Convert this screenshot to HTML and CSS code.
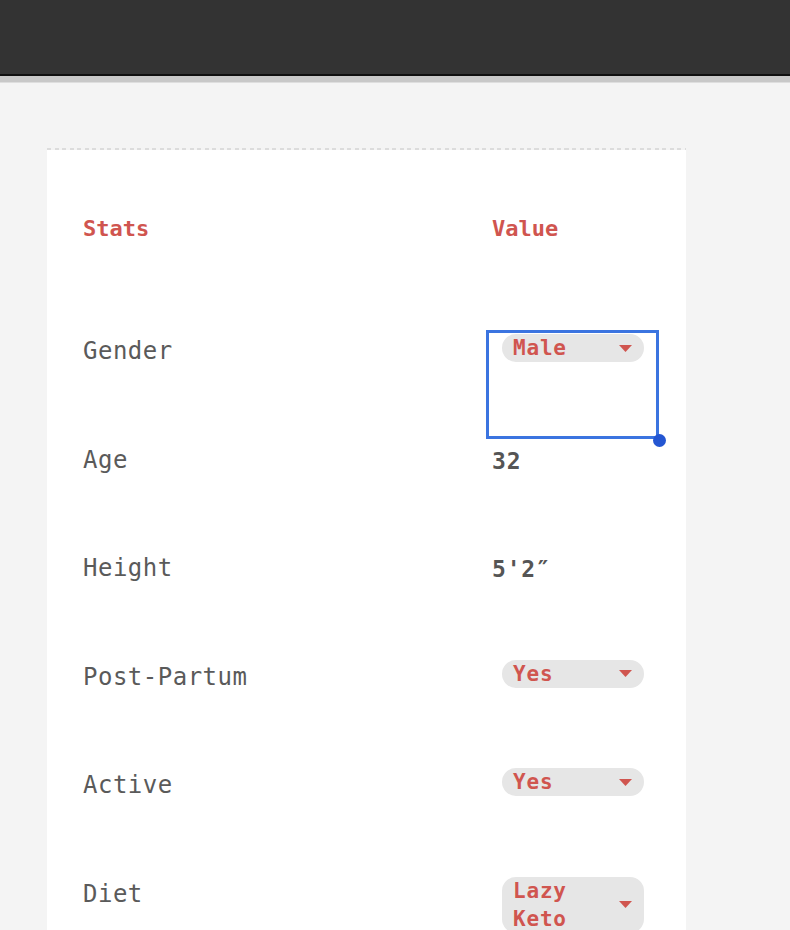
FILE: index.html
```html
<!DOCTYPE html>
<html lang="en">
<head>
<meta charset="utf-8">
<title>Stats</title>
<link rel="stylesheet" href="styles.css">
</head>
<body>
<header class="topbar"></header>
<div class="topbar-edge"></div>
<main class="page">
  <section class="card">
    <div class="card-rule"></div>
    <div class="stats">
      <div class="row head">
        <div class="label">Stats</div>
        <div class="value">Value</div>
      </div>
      <div class="row">
        <div class="label">Gender</div>
        <div class="value selected">
          <span class="pill"><span class="pill-text">Male</span><svg class="caret" width="13" height="7" viewBox="0 0 13 7"><polygon points="0,0 13,0 6.5,7"/></svg></span>
          <span class="handle"></span>
        </div>
      </div>
      <div class="row">
        <div class="label">Age</div>
        <div class="value"><span class="num">32</span></div>
      </div>
      <div class="row">
        <div class="label">Height</div>
        <div class="value"><span class="num">5'2″</span></div>
      </div>
      <div class="row">
        <div class="label">Post-Partum</div>
        <div class="value">
          <span class="pill"><span class="pill-text">Yes</span><svg class="caret" width="13" height="7" viewBox="0 0 13 7"><polygon points="0,0 13,0 6.5,7"/></svg></span>
        </div>
      </div>
      <div class="row">
        <div class="label">Active</div>
        <div class="value">
          <span class="pill"><span class="pill-text">Yes</span><svg class="caret" width="13" height="7" viewBox="0 0 13 7"><polygon points="0,0 13,0 6.5,7"/></svg></span>
        </div>
      </div>
      <div class="row">
        <div class="label">Diet</div>
        <div class="value">
          <span class="pill"><span class="pill-text">Lazy Keto</span><svg class="caret" width="13" height="7" viewBox="0 0 13 7"><polygon points="0,0 13,0 6.5,7"/></svg></span>
        </div>
      </div>
    </div>
  </section>
</main>
</body>
</html>
```

FILE: styles.css
```css
html, body {
  margin: 0;
  padding: 0;
}

body {
  background: #f4f4f4;
  font-family: "DejaVu Sans Mono", "Liberation Mono", monospace;
  overflow: hidden;
  height: 930px;
}

.topbar {
  height: 74px;
  background: #333333;
  border-bottom: 2px solid #0f0f0f;
}

.topbar-edge {
  height: 6px;
  background: #c8c8c8;
  border-bottom: 1px solid #dedede;
}

.page {
  padding-top: 65px;
  padding-left: 47px;
}

.card {
  width: 639px;
  background: #ffffff;
  min-height: 900px;
}

.card-rule {
  height: 2px;
  background: repeating-linear-gradient(90deg, #dcdcdc 0 4px, #f4f4f4 4px 7.5px);
}

.stats {
  padding: 63px 26px 0 36px;
}

.row {
  display: grid;
  grid-template-columns: 403px 173px;
  height: 108.6px;
}

.row.head {
  height: 117px;
}

.label {
  padding-top: 5px;
  font-size: 24px;
  line-height: 32px;
  letter-spacing: 0.5px;
  color: #5a5a5a;
}

.value {
  position: relative;
  padding: 4px 0 0 6px;
  line-height: 32px;
}

.head .label,
.head .value {
  padding-top: 0;
  font-size: 22px;
  font-weight: bold;
  letter-spacing: 0;
  color: #d0554f;
}

.num {
  display: inline-block;
  padding-top: 2px;
  font-size: 23px;
  font-weight: bold;
  letter-spacing: 0.8px;
  color: #555555;
}

.pill {
  margin-left: 10px;
  width: 142px;
  box-sizing: border-box;
  display: flex;
  align-items: center;
  justify-content: space-between;
  gap: 4px;
  padding: 0 12px 0 11px;
  border-radius: 14px;
  background: #e6e6e6;
  font-size: 21px;
  font-weight: bold;
  line-height: 28px;
  letter-spacing: 0.8px;
  color: #d0554f;
}

.pill-text {
  flex: 1;
  min-width: 0;
}

.caret {
  flex: none;
  fill: #d0554f;
}

.selected::after {
  content: "";
  position: absolute;
  inset: 0;
  border: 3px solid #3b74e0;
  pointer-events: none;
}

.handle {
  position: absolute;
  right: -7px;
  bottom: -8px;
  width: 13px;
  height: 13px;
  border-radius: 50%;
  background: #2456d2;
  z-index: 1;
}
```
